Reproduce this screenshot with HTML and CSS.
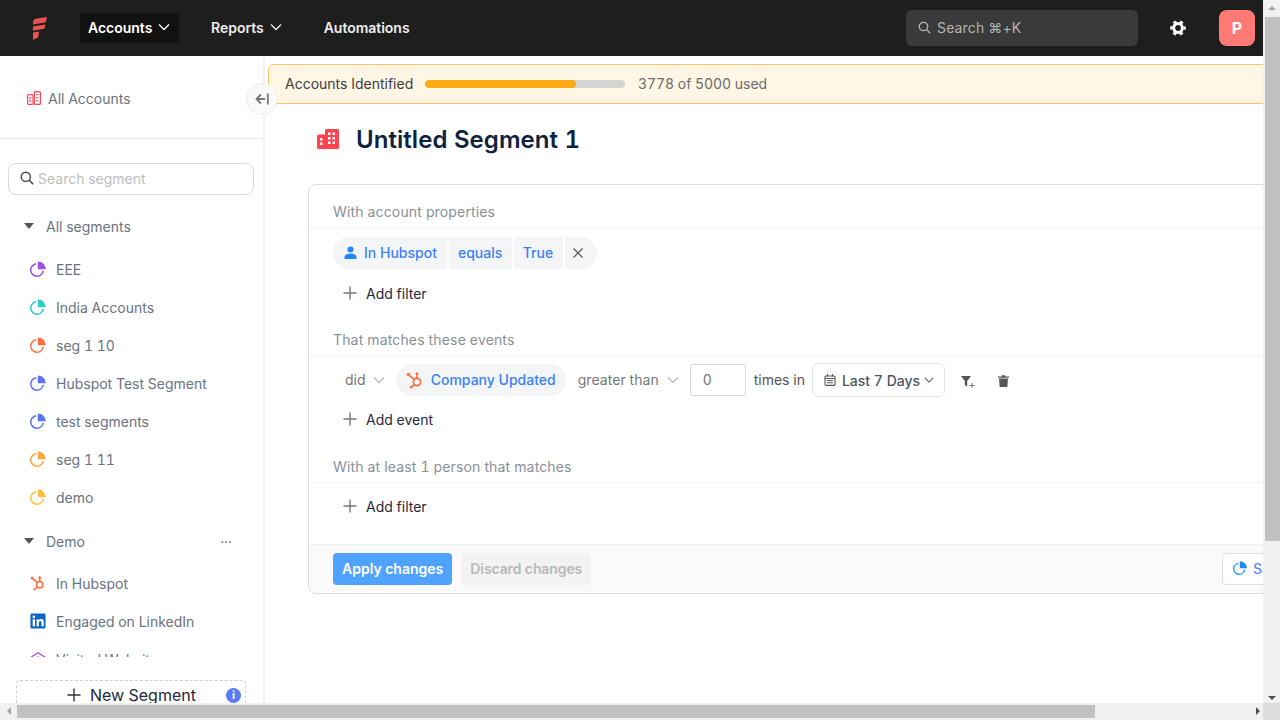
FILE: index.html
```html
<!DOCTYPE html>
<html>
<head>
    <title>Untitled Segment 1</title>
    <link rel="stylesheet" href="styles.css">
</head>
<body>
    <svg class="defs" width="0" height="0">
        <symbol id="pie" viewBox="0 0 16 16">
            <path d="M6.200 2.700A6.300 6.300 0 1 0 13.300 9.800" fill="none" stroke="currentColor" stroke-width="1.500"/>
            <path d="M7.800 .4A7.800 7.800 0 0 1 15.800 8.300H7.800Z" fill="currentColor"/>
        </symbol>
        <symbol id="chev" viewBox="0 0 12 12">
            <path d="M1 3.500l5 5 5-5" fill="none" stroke="currentColor" stroke-width="1.300"/>
        </symbol>
        <symbol id="plus" viewBox="0 0 14 14">
            <path d="M7 .5v13M.5 7h13" fill="none" stroke="currentColor" stroke-width="1.400"/>
        </symbol>
        <symbol id="hub" viewBox="0 0 18 18">
            <g fill="none" stroke="currentColor" stroke-width="1.700">
                <circle cx="11" cy="11" r="3.600"/>
                <path d="M11 7V3.500M8.300 8.600L3 4M8.400 13.600L5.600 16"/>
            </g>
            <circle cx="11" cy="2.800" r="1.500" fill="currentColor"/>
            <circle cx="2.400" cy="3.400" r="1.700" fill="currentColor"/>
            <circle cx="5" cy="16.200" r="1.300" fill="currentColor"/>
        </symbol>
    </svg>

    <div class="window">
        <div class="viewport">
            <header class="topbar">
                <svg class="logo" width="14" height="23" viewBox="0 0 14 23">
                    <path d="M0 5.500Q0 2.300 3 1.700L14 0l-1.200 5.200L0 7.400ZM0 9.500L12.400 7.400l-1 4.300L0 13.800ZM0 15.500L6 14.400 5.300 20.300 0 23Z" fill="#ef5350"/>
                </svg>
                <nav class="topnav">
                    <a class="topnav-item active">Accounts <svg width="12" height="12"><use href="#chev"/></svg></a>
                    <a class="topnav-item">Reports <svg width="12" height="12"><use href="#chev"/></svg></a>
                    <a class="topnav-item auto">Automations</a>
                </nav>
                <div class="global-search">
                    <svg width="13" height="13" viewBox="0 0 13 13"><circle cx="5.500" cy="5.500" r="4.200" fill="none" stroke="currentColor" stroke-width="1.300"/><path d="M8.600 8.600l3.600 3.600" stroke="currentColor" stroke-width="1.300"/></svg>
                    <span>Search ⌘+K</span>
                </div>
                <svg class="gear" width="16" height="16" viewBox="0 0 16 16">
                    <circle cx="8" cy="8" r="4.400" fill="none" stroke="#fff" stroke-width="3"/>
                    <circle cx="8" cy="8" r="6.600" fill="none" stroke="#fff" stroke-width="2.400" stroke-dasharray="3.400 3.500" stroke-dashoffset="1.700"/>
                </svg>
                <div class="avatar">P</div>
            </header>

            <div class="content">
                <aside class="sidebar">
                    <div class="side-top">
                        <svg width="14" height="14" viewBox="0 0 14 14" fill="none" stroke="#f0484e" stroke-width="1.200">
                            <rect x=".6" y="3.600" width="5.400" height="9.800" rx="1"/>
                            <rect x="7.400" y=".6" width="6" height="12.800" rx="1"/>
                            <path d="M2.200 7h2M2.200 10h2M9.400 3.600h2M9.400 6.600h2M9.400 9.600h2" stroke-width="1.400"/>
                        </svg>
                        <span>All Accounts</span>
                    </div>
                    <div class="side-search">
                        <svg width="14" height="14" viewBox="0 0 14 14"><circle cx="5.800" cy="5.800" r="4.600" fill="none" stroke="#444" stroke-width="1.400"/><path d="M9.200 9.200l4 4" stroke="#444" stroke-width="1.600"/></svg>
                        <span>Search segment</span>
                    </div>
                    <div class="seg-list">
                        <div class="seg-group first"><i class="caret"></i>All segments</div>
                        <div class="seg-item"><svg class="c-purple"><use href="#pie"/></svg>EEE</div>
                        <div class="seg-item"><svg class="c-teal"><use href="#pie"/></svg>India Accounts</div>
                        <div class="seg-item"><svg class="c-orange"><use href="#pie"/></svg>seg 1 10</div>
                        <div class="seg-item"><svg class="c-blue"><use href="#pie"/></svg>Hubspot Test Segment</div>
                        <div class="seg-item"><svg class="c-blue"><use href="#pie"/></svg>test segments</div>
                        <div class="seg-item"><svg class="c-amber"><use href="#pie"/></svg>seg 1 11</div>
                        <div class="seg-item"><svg class="c-yellow"><use href="#pie"/></svg>demo</div>
                        <div class="seg-group demo"><i class="caret"></i>Demo<span class="dots">•••</span></div>
                        <div class="seg-item"><svg class="c-orange"><use href="#hub"/></svg>In Hubspot</div>
                        <div class="seg-item">
                            <svg viewBox="0 0 18 18">
                                <rect width="17" height="17" x=".5" y=".5" rx="1.500" fill="#0a66c2"/>
                                <rect x="3" y="7" width="2.600" height="8" fill="#fff"/>
                                <circle cx="4.300" cy="4.400" r="1.500" fill="#fff"/>
                                <path d="M7.400 7h2.500v1.200C10.500 7.300 11.500 6.800 12.600 6.800c2.200 0 2.900 1.400 2.900 3.600V15h-2.600v-4c0-1-.3-1.900-1.300-1.900S10 9.900 10 11v4H7.400Z" fill="#fff"/>
                            </svg>Engaged on LinkedIn
                        </div>
                        <div class="seg-item">
                            <svg class="c-purple" viewBox="0 0 18 18" fill="none" stroke="currentColor" stroke-width="1.500"><path d="M1 7l8-5 8 5"/><path d="M9 6v2"/></svg>Visited Website
                        </div>
                    </div>
                    <div class="new-seg">
                        <svg class="new-plus" width="14" height="14"><use href="#plus"/></svg>
                        <span>New Segment</span>
                        <i class="info">i</i>
                    </div>
                </aside>

                <button class="collapse">
                    <svg width="14" height="12" viewBox="0 0 14 12" fill="none" stroke="#777" stroke-width="1.800"><path d="M6 1.500L1.500 6 6 10.500M1.500 6H10M12.800 .5v11"/></svg>
                </button>

                <main class="main">
                    <div class="usage-banner">
                        <span class="usage-label">Accounts Identified</span>
                        <div class="usage-bar"><div class="usage-fill" style="width:75.56%"></div></div>
                        <span class="usage-count">3778 of 5000 used</span>
                    </div>

                    <div class="title-row">
                        <svg width="22" height="22" viewBox="0 0 22 22">
                            <path d="M1.500 6.500H8V2.500a1.500 1.500 0 0 1 1.500-1.500h11A1.500 1.500 0 0 1 22 2.500v17a1.500 1.500 0 0 1-1.500 1.500H1.500A1.500 1.500 0 0 1 0 19.500V8a1.500 1.500 0 0 1 1.500-1.500Z" fill="#ff444f"/>
                            <path d="M3 10h2.500v2.500H3ZM3 14.500h2.500V17H3ZM11 4.500h2.500V7H11ZM15.500 4.500H18V7h-2.500ZM11 9h2.500v2.500H11ZM15.500 9H18v2.500h-2.500ZM11 13.500h2.500V16H11ZM15.500 13.500H18V16h-2.500Z" fill="#fff"/>
                        </svg>
                        <h1>Untitled Segment 1</h1>
                    </div>

                    <section class="card">
                        <div class="sec-label">With account properties</div>
                        <div class="sec-body">
                            <div class="chips">
                                <span class="chip first">
                                    <svg width="13" height="13" viewBox="0 0 13 13" fill="#1e88f5"><circle cx="6.500" cy="3.400" r="3"/><path d="M.5 13v-1.800C.5 9 2.500 7.600 6.500 7.600s6 1.400 6 3.600V13Z"/></svg>
                                    In Hubspot
                                </span>
                                <span class="chip">equals</span>
                                <span class="chip">True</span>
                                <span class="chip last">
                                    <svg width="10" height="10" viewBox="0 0 10 10"><path d="M.5.5l9 9M9.500.5l-9 9" stroke="#555" stroke-width="1.200"/></svg>
                                </span>
                            </div>
                            <div class="add-row"><svg width="14" height="14"><use href="#plus"/></svg>Add filter</div>
                        </div>

                        <div class="sec-label">That matches these events</div>
                        <div class="sec-body">
                            <div class="event-row">
                                <span class="sel did">did <svg width="12" height="12"><use href="#chev"/></svg></span>
                                <span class="event-chip"><svg class="c-orange" width="18" height="18"><use href="#hub"/></svg>Company Updated</span>
                                <span class="sel than">greater than <svg width="12" height="12"><use href="#chev"/></svg></span>
                                <span class="num-input">0</span>
                                <span class="times">times in</span>
                                <span class="date-btn">
                                    <svg width="12" height="12" viewBox="0 0 12 12" fill="none" stroke="#555" stroke-width="1.100"><rect x="1" y="2" width="10" height="9.400" rx="1"/><path d="M1 4.500h10M3.500 0v2.500M8.500 0v2.500M3 6.500h6M3 8.800h6"/></svg>
                                    Last 7 Days
                                    <svg class="date-chev" width="10" height="10" viewBox="0 0 12 12"><use href="#chev"/></svg>
                                </span>
                                <svg class="filter-ico" width="14" height="12" viewBox="0 0 14 12" fill="#555"><path d="M0 0h10L6.200 5v5.500L3.800 9V5Z"/><path d="M8.500 9.500h5M11 7v5" stroke="#777" stroke-width="1" fill="none"/></svg>
                                <svg class="trash-ico" width="11" height="12" viewBox="0 0 11 12" fill="#555"><path d="M0 1.500h3.500L4 .3h3l.5 1.200H11v1.300H0ZM1 3.600h9L9.300 12H1.700Z"/></svg>
                            </div>
                            <div class="add-row"><svg width="14" height="14"><use href="#plus"/></svg>Add event</div>
                        </div>

                        <div class="sec-label">With at least 1 person that matches</div>
                        <div class="sec-body last-body">
                            <div class="add-row"><svg width="14" height="14"><use href="#plus"/></svg>Add filter</div>
                        </div>

                        <div class="card-foot">
                            <button class="btn-apply">Apply changes</button>
                            <button class="btn-discard">Discard changes</button>
                            <button class="btn-save"><svg class="c-sky" width="14" height="14"><use href="#pie"/></svg>Save as</button>
                        </div>
                    </section>
                </main>
            </div>
        </div>

        <div class="vscroll">
            <i class="arrow up"></i>
            <div class="vthumb"></div>
            <i class="arrow down"></i>
        </div>
        <div class="hscroll">
            <i class="arrow left"></i>
            <div class="hthumb"></div>
            <i class="arrow right"></i>
        </div>
        <div class="corner"></div>
    </div>
</body>
</html>
```

FILE: styles.css
```css
* {
    box-sizing: border-box;
}
html, body {
    margin: 0;
    height: 100%;
    overflow: hidden;
}
body {
    font-family: Inter, "Noto Sans", sans-serif;
    font-size: 14px;
    font-variant-numeric: tabular-nums;
    color: #333;
    background-color: #fff;
}
.defs {
    position: absolute;
}
.window {
    display: grid;
    grid-template-columns: 1263px 17px;
    grid-template-rows: 703px 17px;
    height: 720px;
}
.viewport {
    overflow: hidden;
    display: flex;
    flex-direction: column;
}

/* top bar */
.topbar {
    flex: none;
    height: 56px;
    background-color: #1e1e1e;
    display: flex;
    align-items: center;
    padding-left: 33px;
    color: #fff;
}
.logo {
    margin-right: 33px;
}
.topnav {
    display: flex;
    align-items: center;
}
.topnav-item {
    display: flex;
    align-items: center;
    gap: 6px;
    height: 30px;
    padding: 0 8px 2px;
    margin-right: 24px;
    border-radius: 4px;
    font-weight: 600;
    letter-spacing: -.02px;
    color: #eee;
}
.topnav-item.active {
    background-color: #111;
    color: #fff;
    width: 99px;
}
.topnav-item.auto {
    margin-left: 2px;
}
.global-search {
    display: flex;
    align-items: center;
    gap: 6px;
    width: 232px;
    height: 36px;
    margin-left: auto;
    padding: 0 0 2px 12px;
    background-color: #3a3a3a;
    border-radius: 6px;
    color: #b5b5b5;
    letter-spacing: .15px;
}
.gear {
    margin-left: 32px;
}
.avatar {
    width: 36px;
    height: 36px;
    margin: 0 8px 0 33px;
    background-color: #ff7a75;
    border-radius: 8px;
    display: flex;
    align-items: center;
    justify-content: center;
    font-size: 16px;
    font-weight: 700;
}

.content {
    flex: 1;
    display: flex;
    position: relative;
    min-height: 0;
}

/* sidebar */
.sidebar {
    flex: none;
    width: 265px;
    border-right: 2px solid #f2f2f2;
    display: flex;
    flex-direction: column;
    height: 100%;
    overflow: hidden;
}
.side-top {
    flex: none;
    height: 83px;
    border-bottom: 1px solid #e3e8f0;
    display: flex;
    align-items: center;
    gap: 7px;
    padding: 2px 0 0 27px;
    color: #6b7280;
}
.side-search {
    flex: none;
    display: flex;
    align-items: center;
    gap: 4px;
    height: 32px;
    margin: 24px 0 0 8px;
    width: 246px;
    padding: 0 0 2px 11px;
    border: 1px solid #d9d9d9;
    border-radius: 8px;
    color: #bdbdbd;
}
.seg-list {
    flex: none;
    height: 462px;
    overflow: hidden;
}
.seg-group {
    display: flex;
    align-items: center;
    height: 20px;
    padding-left: 24px;
    color: #6b7280;
}
.seg-group.first {
    margin: 21px 0 14px;
}
.seg-group.demo {
    margin: 15px 0 13px;
}
.caret {
    width: 0;
    height: 0;
    margin-right: 12px;
    border-left: 5.500px solid transparent;
    border-right: 5.500px solid transparent;
    border-top: 6px solid #555;
}
.dots {
    margin-left: auto;
    margin-right: 31px;
    font-size: 6px;
    letter-spacing: .5px;
    color: #666;
}
.seg-item {
    display: flex;
    align-items: center;
    gap: 10px;
    height: 38px;
    padding-left: 30px;
    color: #6b7280;
}
.seg-item svg {
    flex: none;
    width: 16px;
    height: 16px;
}
.c-purple { color: #9b51e0; }
.c-teal { color: #2dcdc6; }
.c-orange { color: #ff7043; }
.c-blue { color: #5b74f5; }
.c-amber { color: #ffa63f; }
.c-yellow { color: #ffbf3c; }
.c-sky { color: #1e88f5; }
.new-seg {
    flex: none;
    display: flex;
    align-items: center;
    height: 36px;
    width: 230px;
    margin: 23px 0 0 16px;
    padding: 0 4px 6px 50px;
    border: 1px dashed #cfcfcf;
    border-radius: 4px;
    font-size: 16px;
    color: #1f2937;
}
.new-plus {
    margin-right: 9px;
    color: #333;
}
.info {
    margin-left: auto;
    width: 15px;
    height: 15px;
    border-radius: 50%;
    background-color: #5b7cf5;
    color: #fff;
    font-size: 11px;
    font-weight: 700;
    font-style: normal;
    text-align: center;
    line-height: 15px;
}
.collapse {
    position: absolute;
    left: 246px;
    top: 27px;
    width: 32px;
    height: 32px;
    padding: 0;
    border: 1px solid #eee;
    border-radius: 50%;
    background-color: #fafafa;
    display: flex;
    align-items: center;
    justify-content: center;
}

/* main column */
.main {
    flex: none;
    width: 998px;
    padding: 8px 0 0 3px;
    overflow: hidden;
}
.usage-banner {
    display: flex;
    align-items: center;
    height: 40px;
    width: 1100px;
    padding: 0 0 1px 16px;
    background-color: #fff6e5;
    border: 1px solid #ffc266;
    border-radius: 6px 0 0 0;
}
.usage-label {
    width: 140px;
    color: #3c3c3c;
}
.usage-bar {
    width: 200px;
    height: 8px;
    margin-top: 1px;
    background-color: #d4d4d4;
    border-radius: 4px;
    overflow: hidden;
}
.usage-fill {
    height: 100%;
    background-color: #fdab14;
    border-radius: 4px;
}
.usage-count {
    margin-left: 13px;
    color: #6b6b6b;
    letter-spacing: -.05px;
}
.title-row {
    display: flex;
    align-items: center;
    gap: 17px;
    height: 36px;
    margin: 17px 0 0 49px;
}
.title-row h1 {
    margin: 0;
    font-size: 24px;
    font-weight: 600;
    letter-spacing: .05px;
    color: #0e2240;
}

/* segment card */
.card {
    width: 1040px;
    height: 410px;
    margin: 27px 0 0 40px;
    border: 1px solid #dcdcdc;
    border-radius: 8px;
    display: flex;
    flex-direction: column;
}
.sec-label {
    height: 44px;
    padding: 19px 0 0 24px;
    border-bottom: 1px solid #f2f2f2;
    color: #8a8f98;
    line-height: 17px;
    letter-spacing: .15px;
}
.sec-label:first-child {
    padding-top: 18px;
}
.sec-body {
    height: 83px;
    padding: 8px 0 0 24px;
}
.last-body {
    height: 61px;
    padding-top: 0;
}
.chips {
    display: flex;
    gap: 2px;
    height: 32px;
    font-weight: 500;
}
.chip {
    display: flex;
    align-items: center;
    padding: 0 9px 1px;
    background-color: #f4f5f7;
    color: #3b82f6;
}
.chip.first {
    gap: 7px;
    padding: 0 10px 1px 11px;
    border-radius: 16px 0 0 16px;
}
.chip + .chip {
    padding-right: 9.500px;
}
.chip.last {
    padding: 0 14px 0 8px;
    border-radius: 0 16px 16px 0;
}
.add-row {
    display: flex;
    align-items: center;
    gap: 9px;
    height: 32px;
    margin-top: 8px;
    padding-left: 10px;
    color: #1f2937;
}
.add-row svg {
    color: #777;
}
.event-row + .add-row {
    margin-top: 6px;
}
.last-body .add-row {
    margin-top: 7px;
}
.event-row {
    display: flex;
    align-items: center;
    height: 34px;
    color: #777;
    margin-top: -1px;
}
.sel {
    display: flex;
    align-items: center;
    gap: 7px;
    padding-bottom: 1px;
    letter-spacing: .05px;
}
.sel svg {
    color: #bbb;
}
.did {
    margin-left: 12px;
}
.event-chip {
    display: flex;
    align-items: center;
    gap: 7px;
    width: 170px;
    height: 32px;
    margin-left: 11px;
    padding: 0 0 1px 10px;
    background-color: #f4f5f7;
    border-radius: 16px;
    color: #3b82f6;
    font-weight: 500;
}
.than {
    margin-left: 12px;
    gap: 8px;
}
.num-input {
    width: 56px;
    height: 32px;
    margin-left: 11px;
    padding: 6px 0 0 12px;
    border: 1px solid #d9d9d9;
    border-radius: 2px;
    line-height: 17px;
}
.times {
    margin-left: 8px;
    padding-bottom: 1px;
    color: #555;
}
.date-btn {
    display: flex;
    align-items: center;
    gap: 6px;
    width: 133px;
    height: 34px;
    margin-left: 7px;
    padding-left: 11px;
    border: 1px solid #e2e2e2;
    border-radius: 6px;
    font-weight: 500;
    color: #4b5563;
}
.date-chev {
    margin-left: -2px;
    color: #555;
}
.filter-ico {
    margin: 4px 0 0 16px;
}
.trash-ico {
    margin: 2px 0 0 23px;
}
.card-foot {
    flex: 1;
    display: flex;
    align-items: center;
    padding: 0 24px;
    background-color: #fafafa;
    border-top: 1px solid #f0f0f0;
    border-radius: 0 0 8px 8px;
}
.card-foot button {
    height: 32px;
    border: none;
    border-radius: 4px;
    font-family: inherit;
    font-size: 14px;
    font-weight: 600;
    padding: 0 9px 2px;
    white-space: nowrap;
}
.btn-apply {
    background-color: #4fa3ff;
    color: #fff;
}
.card-foot .btn-discard {
    margin-left: 9px;
    background-color: #f3f3f3;
    color: #b8b8b8;
    width: 130px;
    letter-spacing: -.1px;
}
.card-foot .btn-save {
    display: flex;
    align-items: center;
    gap: 6px;
    width: 101px;
    margin-left: auto;
    padding-left: 10px;
    background-color: #fff;
    border: 1px solid #dedede;
    color: #5b8cff;
    font-weight: 500;
}

/* scrollbars */
.vscroll, .hscroll {
    background-color: #f1f1f1;
    position: relative;
}
.vthumb {
    position: absolute;
    left: 2px;
    right: 0;
    top: 17px;
    height: 524px;
    background-color: #c1c1c1;
}
.hthumb {
    position: absolute;
    left: 17px;
    top: 2px;
    bottom: 2px;
    width: 1078px;
    background-color: #c1c1c1;
}
.corner {
    background-color: #dcdcdc;
}
.arrow {
    position: absolute;
    width: 0;
    height: 0;
    border: 4px solid transparent;
}
.arrow.up {
    top: 2px;
    left: 5px;
    border-bottom-color: #a3a3a3;
}
.arrow.down {
    bottom: -1px;
    left: 5px;
    border-top-color: #505050;
}
.arrow.left {
    left: 3px;
    top: 4px;
    border-right-color: #a3a3a3;
}
.arrow.right {
    right: -1px;
    top: 4px;
    border-left-color: #505050;
}
```
